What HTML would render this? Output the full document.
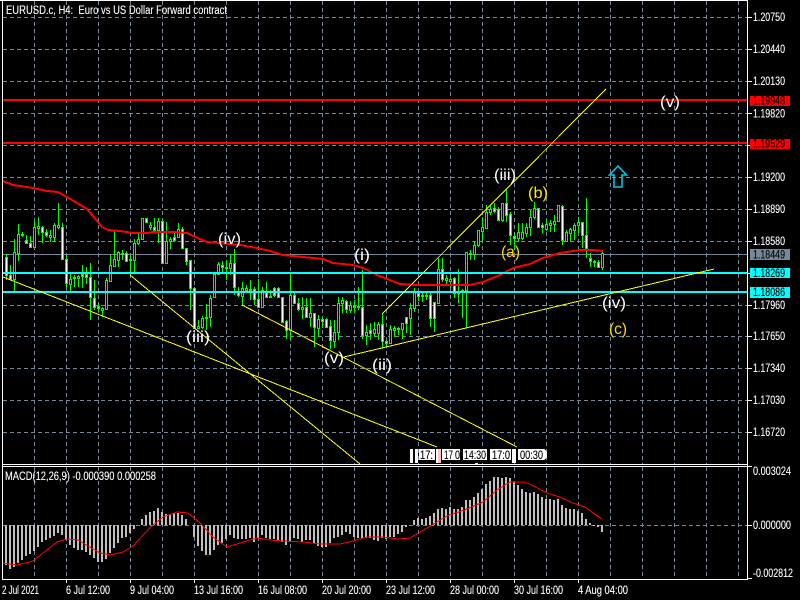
<!DOCTYPE html>
<html><head><meta charset="utf-8"><title>EURUSD.c H4</title>
<style>html,body{margin:0;padding:0;background:#000}svg{display:block}text{font-family:"Liberation Sans",sans-serif;font-size:11.5px;fill:#fff;stroke:#fff;stroke-width:.12}.w{font-size:16px;stroke:none}.k{fill:#000;stroke:#000}</style></head>
<body>
<svg width="800" height="600" viewBox="0 0 800 600" xmlns="http://www.w3.org/2000/svg">
<rect width="800" height="600" fill="#000"/>
<g shape-rendering="crispEdges">
<!-- grid -->
<path fill="none" stroke="#778899" stroke-dasharray="4 3" d="M3 17.5H747M3 49.5H747M3 81.5H747M3 113.5H747M3 145.5H747M3 177.5H747M3 209.5H747M3 241.5H747M3 273.5H747M3 305.5H747M3 336.5H747M3 368.5H747M3 400.5H747M3 432.5H747
M34.5 1V464M66.5 1V464M98.5 1V464M130.5 1V464M162.5 1V464M194.5 1V464M226.5 1V464M258.5 1V464M290.5 1V464M322.5 1V464M354.5 1V464M386.5 1V464M418.5 1V464M450.5 1V464M482.5 1V464M514.5 1V464M546.5 1V464M578.5 1V464M610.5 1V464M642.5 1V464M674.5 1V464M706.5 1V464M738.5 1V464
M34.5 467V579M66.5 467V579M98.5 467V579M130.5 467V579M162.5 467V579M194.5 467V579M226.5 467V579M258.5 467V579M290.5 467V579M322.5 467V579M354.5 467V579M386.5 467V579M418.5 467V579M450.5 467V579M482.5 467V579M514.5 467V579M546.5 467V579M578.5 467V579M610.5 467V579M642.5 467V579M674.5 467V579M706.5 467V579M738.5 467V579
M3 525.5H752"/>
<path stroke="#778899" d="M3 254.5H747"/>
<!-- wicks -->
<path fill="none" stroke="#00ff00" d="M6.5 254V280M10.5 265V280M14.5 239V293M18.5 224V261M22.5 232V237M26.5 235V244M30.5 236V248M34.5 222V248M38.5 217V235M42.5 226V243M46.5 229V237M50.5 230V242M54.5 223V242M58.5 203V229M62.5 223V260M66.5 255V288M70.5 273V293M74.5 275V287M78.5 275V287M82.5 265V288M86.5 267V284M90.5 263V320M94.5 280V310M98.5 304V312M102.5 307V317M106.5 278V310M110.5 255V281M114.5 231V267M118.5 251V267M122.5 250V260M126.5 251V262M130.5 255V275M134.5 239V273M138.5 233V245M142.5 218V240M146.5 218V223M150.5 222V230M154.5 218V232M158.5 218V243M162.5 219V263M166.5 222V263M170.5 237V249M174.5 233V241M178.5 223V237M182.5 227V249M186.5 248V265M190.5 260V310M194.5 287V329M198.5 320V329M202.5 316V329M206.5 304V330M210.5 295V327M214.5 273V298M218.5 262V275M222.5 261V272M226.5 260V280M230.5 254V275M234.5 249V295M238.5 287V297M242.5 282V305M246.5 285V293M250.5 280V300M254.5 287V305M258.5 279V308M262.5 287V308M266.5 282V298
M270.5 290V298M274.5 287V297M278.5 287V297M282.5 297V323M286.5 320V339M290.5 274V340M294.5 293V304M298.5 298V311M302.5 297V319M306.5 298V318M310.5 298V327M314.5 313V347M318.5 315V337M322.5 318V328M326.5 318V328M330.5 320V349M334.5 320V348M338.5 297V340M342.5 297V313M346.5 300V313M350.5 301V313M354.5 300V313M358.5 287V310M362.5 270V339M366.5 325V345M370.5 323V340M374.5 322V337M378.5 322V340M382.5 314V348M386.5 340V347M390.5 325V343M394.5 326V337M398.5 327V335M402.5 323V339M406.5 317V333M410.5 303V335M414.5 288V312M418.5 292V301M422.5 293V302M426.5 293V300M430.5 293V327M434.5 302V332M438.5 258V303M442.5 258V282M446.5 275V285M450.5 277V288M454.5 277V298M458.5 269V303M462.5 289V318M466.5 252V328M470.5 250V260M474.5 242V260M478.5 230V247M482.5 217V241M486.5 205V229M490.5 206V215M494.5 203V213M498.5 207V221M502.5 203V222M506.5 189V222M510.5 212V245M514.5 233V250M518.5 223V242M522.5 223V240M526.5 223V237M530.5 210V236M534.5 202V219M538.5 208V227M542.5 223V233M546.5 220V231M550.5 220V232M554.5 215V232M558.5 205V222M562.5 205V245M566.5 230V242M570.5 228V241M574.5 223V240M578.5 217V233M582.5 222V248M586.5 198V258M590.5 253V267M594.5 260V267M598.5 260V268M602.5 252V270"/>
<!-- white bodies -->
<path fill="#fff" stroke="#00ff00" d="M5.5 257.5h2v18h-2zM9.5 275.5h2v4h-2zM21.5 234.5h2v1h-2zM25.5 240.5h2v3h-2zM29.5 243.5h2v4h-2zM41.5 227.5h2v5h-2zM45.5 232.5h2v3h-2zM61.5 227.5h2v32h-2zM65.5 259.5h2v24h-2zM81.5 274.5h2v2h-2zM85.5 274.5h2v3h-2zM89.5 277.5h2v20h-2zM93.5 298.5h2v9h-2zM97.5 306.5h2v2h-2zM125.5 253.5h2v8h-2zM145.5 218.5h2v4h-2zM153.5 227.5h2v3h-2zM161.5 221.5h2v42h-2zM173.5 237.5h2v3h-2zM181.5 229.5h2v19h-2zM185.5 248.5h2v13h-2zM189.5 260.5h2v28h-2zM193.5 288.5h2v40h-2zM221.5 265.5h2v2h-2zM233.5 263.5h2v24h-2zM237.5 292.5h2v3h-2zM253.5 289.5h2v10h-2zM257.5 299.5h2v8h-2zM265.5 292.5h2v5h-2z
M273.5 288.5h2v7h-2zM277.5 288.5h2v9h-2zM281.5 297.5h2v25h-2zM285.5 321.5h2v9h-2zM293.5 295.5h2v8h-2zM297.5 303.5h2v6h-2zM305.5 307.5h2v10h-2zM313.5 313.5h2v14h-2zM321.5 319.5h2v2h-2zM325.5 319.5h2v8h-2zM329.5 326.5h2v14h-2zM345.5 301.5h2v8h-2zM353.5 306.5h2v1h-2zM361.5 307.5h2v28h-2zM369.5 330.5h2v3h-2zM381.5 324.5h2v17h-2zM385.5 341.5h2v2h-2zM397.5 328.5h2v1h-2zM405.5 317.5h2v6h-2zM417.5 293.5h2v3h-2zM429.5 295.5h2v23h-2zM433.5 302.5h2v16h-2zM441.5 269.5h2v10h-2zM453.5 278.5h2v15h-2zM493.5 208.5h2v3h-2zM497.5 209.5h2v11h-2zM505.5 203.5h2v12h-2zM509.5 214.5h2v21h-2zM513.5 236.5h2v2h-2zM537.5 208.5h2v19h-2zM541.5 225.5h2v2h-2zM561.5 206.5h2v34h-2zM581.5 222.5h2v13h-2zM585.5 235.5h2v13h-2zM589.5 258.5h2v3h-2zM593.5 261.5h2v1h-2zM597.5 262.5h2v5h-2z"/>
<!-- dark bodies -->
<path fill="#000" stroke="#00ff00" d="M13.5 252.5h2v27h-2zM17.5 234.5h2v19h-2zM33.5 227.5h2v20h-2zM37.5 226.5h2v2h-2zM49.5 235.5h2v2h-2zM53.5 225.5h2v12h-2zM57.5 225.5h2v2h-2zM69.5 279.5h2v5h-2zM73.5 277.5h2v1h-2zM77.5 276.5h2v2h-2zM101.5 308.5h2v2h-2zM105.5 280.5h2v29h-2zM109.5 265.5h2v16h-2zM113.5 259.5h2v7h-2zM117.5 252.5h2v8h-2zM121.5 253.5h2v1h-2zM129.5 259.5h2v1h-2zM133.5 243.5h2v17h-2zM137.5 239.5h2v4h-2zM141.5 218.5h2v21h-2zM149.5 225.5h2v2h-2zM157.5 221.5h2v9h-2zM165.5 241.5h2v22h-2zM169.5 239.5h2v2h-2zM177.5 229.5h2v8h-2zM197.5 326.5h2v2h-2zM201.5 318.5h2v9h-2zM205.5 317.5h2v1h-2zM209.5 298.5h2v19h-2zM213.5 274.5h2v23h-2zM217.5 264.5h2v10h-2zM225.5 267.5h2v1h-2zM229.5 263.5h2v5h-2zM241.5 288.5h2v8h-2zM245.5 288.5h2v2h-2zM249.5 289.5h2v1h-2zM261.5 290.5h2v17h-2z
M269.5 296.5h2v1h-2zM289.5 295.5h2v35h-2zM301.5 307.5h2v2h-2zM309.5 313.5h2v4h-2zM317.5 319.5h2v9h-2zM333.5 332.5h2v9h-2zM337.5 303.5h2v29h-2zM341.5 300.5h2v3h-2zM349.5 305.5h2v5h-2zM357.5 306.5h2v1h-2zM365.5 332.5h2v3h-2zM373.5 329.5h2v4h-2zM377.5 324.5h2v9h-2zM389.5 329.5h2v14h-2zM393.5 328.5h2v2h-2zM401.5 323.5h2v6h-2zM409.5 308.5h2v10h-2zM413.5 292.5h2v16h-2zM421.5 295.5h2v1h-2zM425.5 295.5h2v1h-2zM437.5 269.5h2v34h-2zM445.5 278.5h2v2h-2zM449.5 279.5h2v2h-2zM457.5 291.5h2v2h-2zM461.5 290.5h2v1h-2zM465.5 252.5h2v38h-2zM469.5 253.5h2v1h-2zM473.5 245.5h2v9h-2zM477.5 230.5h2v15h-2zM481.5 227.5h2v4h-2zM485.5 212.5h2v16h-2zM489.5 209.5h2v3h-2zM501.5 203.5h2v17h-2zM517.5 232.5h2v6h-2zM521.5 232.5h2v6h-2zM525.5 227.5h2v6h-2zM529.5 217.5h2v10h-2zM533.5 208.5h2v9h-2zM545.5 224.5h2v5h-2zM549.5 223.5h2v2h-2zM553.5 221.5h2v3h-2zM557.5 205.5h2v16h-2zM565.5 232.5h2v9h-2zM569.5 229.5h2v4h-2zM573.5 225.5h2v5h-2zM577.5 222.5h2v3h-2zM601.5 253.5h2v14h-2z"/>
<!-- MA -->
<polyline fill="none" stroke="#ff0000" stroke-width="2" points="3,181 13,185 20,186 33,188 47,191 58,192 67,197 77,203 87,209 93,216 102,227 108,230 120,231 133,233 147,233 153,232 173,232 187,233 200,239 207,242 220,243 240,245 257,248 270,251 283,255 303,257 323,259 333,263 353,265 363,268 377,275 400,284 417,285 470,285 483,282 500,275 513,268 530,264 543,258 560,253 580,250 593,250 603,251"/>
<!-- horizontal lines -->
<path stroke="#ff0000" stroke-width="2" d="M3 100H747M3 143H747"/>
<path stroke="#00ffff" stroke-width="2" d="M3 273H747M3 292H747"/>
<!-- trend lines -->
<path fill="none" stroke="#ffff00" stroke-width="1" d="M3 277L437 447M130 275L360 464M242 305L517 447M344 357L714 269M382 314L606 89"/>
<!-- frames -->
<path fill="none" stroke="#fff" d="M2.5 0V579M0 .5H748M747.5 0V579M2 464.5H748M2 466.5H748M2 579.5H748
M748 17.5h4M748 49.5h4M748 81.5h4M748 113.5h4M748 145.5h2M748 177.5h4M748 209.5h4M748 241.5h4M748 273.5h2M748 305.5h4M748 336.5h4M748 368.5h4M748 400.5h4M748 432.5h4M748 466.5h4M748 525.5h4M748 578.5h4
M66.5 579v4M130.5 579v4M194.5 579v4M258.5 579v4M322.5 579v4M386.5 579v4M450.5 579v4M514.5 579v4M578.5 579v4"/>
<!-- histogram -->
<path fill="none" stroke="#c0c0c0" stroke-width="2" d="M6 525V565M10 525V569M14 525V567M18 525V563M22 525V560M26 525V556M30 525V554M34 525V551M38 525V547M42 525V542M46 525V540M50 525V538M54 525V536M58 525V533M62 525V535M66 525V540M70 525V545M74 525V548M78 525V550M82 525V550M86 525V552M90 525V555M94 525V558M98 525V562M102 525V562M106 525V559M110 525V553M114 525V548M118 525V543M122 525V538M126 525V537M130 525V533M134 525V529M142 525V519M146 525V515M150 525V512M154 525V511M158 525V508M162 525V512M166 525V514M170 525V514M174 525V513M178 525V513M182 525V515M186 525V519M194 525V537M198 525V546M202 525V551M206 525V555M210 525V555M214 525V550M218 525V545M222 525V543M226 525V539M230 525V535M234 525V538M238 525V539M242 525V539M246 525V539M250 525V538M254 525V542M258 525V538M262 525V535M266 525V538M270 525V539M274 525V539M278 525V540M282 525V542M286 525V545M290 525V541M294 525V538M298 525V539M302 525V542M306 525V540M310 525V540M314 525V543M318 525V546M322 525V547M326 525V547M330 525V543M334 525V538M338 525V537M342 525V535M346 525V532M350 525V534M354 525V537M358 525V538M362 525V538M366 525V538M370 525V538M374 525V540M378 525V541M382 525V538M386 525V539M390 525V537M394 525V537M398 525V534M402 525V532M406 525V527M414 525V520M418 525V518M422 525V519M426 525V518M430 525V516M434 525V513M438 525V509M442 525V508M446 525V509M450 525V507M454 525V509M458 525V509M462 525V507M466 525V500M470 525V500M474 525V497M478 525V493M482 525V489M486 525V484M490 525V481M494 525V477M498 525V477M502 525V478M506 525V477M510 525V478M514 525V482M518 525V485M522 525V489M526 525V492M530 525V493M534 525V492M538 525V494M542 525V497M546 525V499M550 525V499M554 525V500M558 525V499M562 525V505M566 525V508M570 525V509M574 525V509M578 525V511M582 525V513M586 525V519M590 525V523M594 525V526M598 525V527M602 525V532"/>
<polyline fill="none" stroke="#ff0000" stroke-width="1" points="3,563 17,565 33,561 43,553 57,542 67,539 78,540 88,546 100,553 110,555 123,552 133,546 143,535 153,525 163,517 177,512 188,513 200,523 213,537 227,547 240,543 257,538 270,540 283,541 303,542 320,544 340,544 353,541 367,537 383,537 398,539 410,538 427,528 447,516 467,509 483,502 497,490 510,482 523,482 530,484 547,493 560,497 573,503 585,507 593,513 602,519"/>
<!-- time tags -->
<path fill="#fff" d="M410 449h3v14h-3zM415 449h3v14h-3zM419 449h16v11h-16zM436 449h2v14h-2zM442 449h18v11h-18zM463 449h24v11h-24zM490 449h21v11h-21zM512 449h4v14h-4zM518 449h26l3 3v5l-3 3h-26z"/>
<path fill="#ffc0cb" d="M438 449h3v14h-3z"/>
<path fill="#ffff00" d="M475 463h3v1h-3z"/>
<!-- price boxes -->
<rect x="750" y="96" width="40" height="10" fill="#ff0000"/>
<rect x="750" y="139" width="40" height="10" fill="#ff0000"/>
<rect x="750" y="249" width="40" height="11" fill="#778899"/>
<rect x="750" y="268" width="40" height="10" fill="#00ffff"/>
<rect x="750" y="287" width="40" height="11" fill="#00ffff"/>
</g>
<!-- arrow -->
<path fill="none" stroke="#00c8e6" stroke-width="1.6" d="M618 166L609.5 175H614V187H622V175H626.5Z"/>
<!-- title -->
<text x="6" y="14" textLength="221" lengthAdjust="spacingAndGlyphs" xml:space="preserve">EURUSD.c, H4:  Euro vs US Dollar Forward contract</text>
<text x="5" y="480" textLength="151" lengthAdjust="spacingAndGlyphs">MACD(12,26,9) -0.000390 0.000258</text>
<!-- axis labels -->
<g>
<text x="753" y="21" textLength="32" lengthAdjust="spacingAndGlyphs">1.20750</text>
<text x="753" y="53" textLength="32" lengthAdjust="spacingAndGlyphs">1.20440</text>
<text x="753" y="85" textLength="32" lengthAdjust="spacingAndGlyphs">1.20130</text>
<text x="753" y="117.5" textLength="32" lengthAdjust="spacingAndGlyphs">1.19820</text>
<text x="753" y="181" textLength="32" lengthAdjust="spacingAndGlyphs">1.19200</text>
<text x="753" y="213" textLength="32" lengthAdjust="spacingAndGlyphs">1.18890</text>
<text x="753" y="245" textLength="32" lengthAdjust="spacingAndGlyphs">1.18580</text>
<text x="753" y="309" textLength="32" lengthAdjust="spacingAndGlyphs">1.17960</text>
<text x="753" y="340" textLength="32" lengthAdjust="spacingAndGlyphs">1.17650</text>
<text x="753" y="372" textLength="32" lengthAdjust="spacingAndGlyphs">1.17340</text>
<text x="753" y="404" textLength="32" lengthAdjust="spacingAndGlyphs">1.17030</text>
<text x="753" y="436" textLength="32" lengthAdjust="spacingAndGlyphs">1.16720</text>
<text class="k" x="753" y="104.5" textLength="32" lengthAdjust="spacingAndGlyphs">1.19948</text>
<text class="k" x="753" y="147.5" textLength="32" lengthAdjust="spacingAndGlyphs">1.19529</text>
<text class="k" x="753" y="258.5" textLength="32" lengthAdjust="spacingAndGlyphs">1.18449</text>
<text class="k" x="753" y="277" textLength="32" lengthAdjust="spacingAndGlyphs">1.18269</text>
<text class="k" x="753" y="296" textLength="32" lengthAdjust="spacingAndGlyphs">1.18086</text>
<text x="753" y="475" textLength="38" lengthAdjust="spacingAndGlyphs">0.003024</text>
<text x="753" y="529" textLength="38" lengthAdjust="spacingAndGlyphs">0.000000</text>
<text x="753" y="577" textLength="40" lengthAdjust="spacingAndGlyphs">-0.002812</text>
</g>
<!-- date labels -->
<g>
<text x="2" y="594" textLength="37" lengthAdjust="spacingAndGlyphs">2 Jul 2021</text>
<text x="66" y="594" textLength="44" lengthAdjust="spacingAndGlyphs">6 Jul 12:00</text>
<text x="130" y="594" textLength="44" lengthAdjust="spacingAndGlyphs">9 Jul 04:00</text>
<text x="194" y="594" textLength="49" lengthAdjust="spacingAndGlyphs">13 Jul 16:00</text>
<text x="258" y="594" textLength="49" lengthAdjust="spacingAndGlyphs">16 Jul 08:00</text>
<text x="322" y="594" textLength="49" lengthAdjust="spacingAndGlyphs">20 Jul 20:00</text>
<text x="386" y="594" textLength="49" lengthAdjust="spacingAndGlyphs">23 Jul 12:00</text>
<text x="450" y="594" textLength="49" lengthAdjust="spacingAndGlyphs">28 Jul 00:00</text>
<text x="514" y="594" textLength="49" lengthAdjust="spacingAndGlyphs">30 Jul 16:00</text>
<text x="578" y="594" textLength="50" lengthAdjust="spacingAndGlyphs">4 Aug 04:00</text>
</g>
<!-- tag text -->
<g>
<text class="k" x="420" y="459" textLength="13" lengthAdjust="spacingAndGlyphs">17:</text>
<text class="k" x="444" y="459" textLength="9" lengthAdjust="spacingAndGlyphs">17</text>
<text class="k" x="455" y="459" textLength="5" lengthAdjust="spacingAndGlyphs">0</text>
<text class="k" x="464" y="459" textLength="22" lengthAdjust="spacingAndGlyphs">14:30</text>
<text class="k" x="492" y="459" textLength="18" lengthAdjust="spacingAndGlyphs">17:0</text>
<text class="k" x="520" y="459" textLength="23" lengthAdjust="spacingAndGlyphs">00:30</text>
</g>
<!-- wave labels -->
<g>
<text class="w" x="218" y="244" textLength="23" lengthAdjust="spacingAndGlyphs">(iv)</text>
<text class="w" x="186" y="342" textLength="24" lengthAdjust="spacingAndGlyphs">(iii)</text>
<text class="w" x="324" y="363" textLength="20" lengthAdjust="spacingAndGlyphs">(v)</text>
<text class="w" x="372" y="370" textLength="20" lengthAdjust="spacingAndGlyphs">(ii)</text>
<text class="w" x="354" y="260" textLength="16" lengthAdjust="spacingAndGlyphs">(i)</text>
<text class="w" x="494" y="180" textLength="22" lengthAdjust="spacingAndGlyphs">(iii)</text>
<text class="w" x="660" y="107" textLength="20" lengthAdjust="spacingAndGlyphs">(v)</text>
<text class="w" x="602" y="308" textLength="24" lengthAdjust="spacingAndGlyphs">(iv)</text>
<text class="w" x="501" y="257" textLength="19" lengthAdjust="spacingAndGlyphs" style="fill:#ffd800">(a)</text>
<text class="w" x="528" y="198" textLength="20" lengthAdjust="spacingAndGlyphs" style="fill:#ffe800">(b)</text>
<text class="w" x="609" y="334" textLength="18" lengthAdjust="spacingAndGlyphs" style="fill:#ffd800">(c)</text>
</g>
</svg>
</body></html>
